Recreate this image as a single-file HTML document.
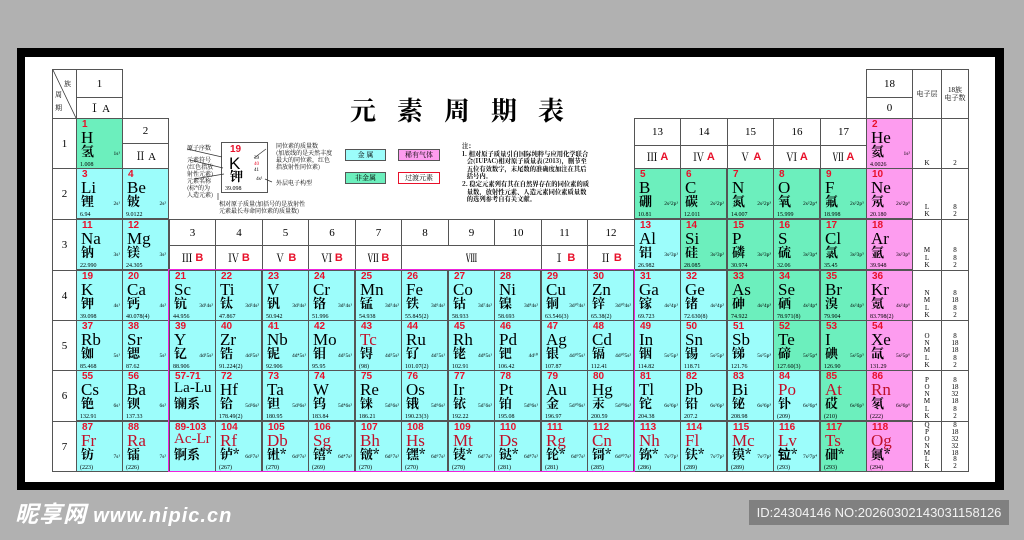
<!DOCTYPE html>
<html><head><meta charset="utf-8">
<style>
*{margin:0;padding:0}
body{width:1024px;height:540px;background:#b1b1b1;position:relative;overflow:hidden;font-family:"Liberation Serif","Noto Serif CJK SC",serif}
#frame{position:absolute;left:17px;top:48px;width:987px;height:442px;background:#000}
#white{position:absolute;left:25px;top:57px;width:970px;height:425px;background:#fff}
.c{position:absolute;width:47px;height:51px;box-sizing:border-box;border:1px solid #555;overflow:hidden;background:#fff;line-height:1}
.c b{position:absolute;left:5px;top:1px;font:bold 10px/1 "Liberation Sans",sans-serif;color:#e8102a;white-space:nowrap}
.c i{position:absolute;left:4px;top:10px;font-style:normal;font-size:17px;line-height:1;color:#000;white-space:nowrap}
.c u{position:absolute;left:4px;top:25px;text-decoration:none;font-size:13px;line-height:1;font-family:"Noto Serif CJK SC",serif;font-weight:bold;white-space:nowrap}
.c s{position:absolute;left:3px;bottom:0px;text-decoration:none;font-size:6px;line-height:1}
.c em{position:absolute;right:2px;top:33px;font-style:normal;font-size:5.5px;line-height:1}
.c .sm{font-size:15px}
.a{background:#9cfdfb}.g{background:#6cefbd}.p{background:#fd9cef}
.r i{color:#c0102a}
.h{position:absolute;box-sizing:border-box;border:1px solid #555;background:#fff;text-align:center;font-size:11px;display:flex;align-items:center;justify-content:center}
.h .rd{color:#e8102a;font-family:"Liberation Sans",sans-serif;font-weight:bold}
.sh{position:absolute;box-sizing:border-box;border:1px solid #555;background:#fff;font-size:7px;text-align:center;line-height:7.2px;display:flex;flex-direction:column;justify-content:flex-end;padding-bottom:1px}
.t{position:absolute;font-size:6.5px;line-height:8px;font-family:"Noto Serif CJK SC",serif;white-space:nowrap}
</style></head><body>
<div id="frame"></div><div id="white"></div>

<div class="h" style="left:52px;top:69px;width:25px;height:50px"></div>
<svg style="position:absolute;left:52px;top:69px" width="25" height="50"><line x1="1" y1="1" x2="24" y2="49" stroke="#333" stroke-width="0.8"/></svg>
<div class="t" style="left:64px;top:80px;font-size:7px">族</div>
<div class="t" style="left:55px;top:91px;font-size:7px">周</div>
<div class="t" style="left:55px;top:104px;font-size:7px">期</div>
<div class="h" style="left:76px;top:69px;width:47px;height:29px">1</div>
<div class="h" style="left:76px;top:97px;width:47px;height:22px">Ⅰ A</div>
<div class="h" style="left:122px;top:118px;width:47px;height:26px">2</div>
<div class="h" style="left:122px;top:143px;width:47px;height:26px">Ⅱ A</div>
<div class="h" style="left:866px;top:69px;width:47px;height:29px">18</div>
<div class="h" style="left:866px;top:97px;width:47px;height:22px">0</div>
<div class="h" style="left:912px;top:69px;width:30px;height:50px;font-size:7px">电子层</div>
<div class="h" style="left:941px;top:69px;width:28px;height:50px;font-size:7px;line-height:8px">18族<br>电子数</div>

<div class="h" style="left:52px;top:118px;width:25px;height:51px">1</div>
<div class="h" style="left:52px;top:168px;width:25px;height:52px">2</div>
<div class="h" style="left:52px;top:219px;width:25px;height:52px">3</div>
<div class="h" style="left:52px;top:270px;width:25px;height:51px">4</div>
<div class="h" style="left:52px;top:320px;width:25px;height:51px">5</div>
<div class="h" style="left:52px;top:370px;width:25px;height:52px">6</div>
<div class="h" style="left:52px;top:421px;width:25px;height:51px">7</div>

<div class="h" style="left:634px;top:118px;width:47px;height:28px">13</div>
<div class="h" style="left:680px;top:118px;width:48px;height:28px">14</div>
<div class="h" style="left:727px;top:118px;width:47px;height:28px">15</div>
<div class="h" style="left:773px;top:118px;width:48px;height:28px">16</div>
<div class="h" style="left:820px;top:118px;width:47px;height:28px">17</div>
<div class="h" style="left:634px;top:145px;width:47px;height:24px">Ⅲ&nbsp;<span class="rd">A</span></div>
<div class="h" style="left:680px;top:145px;width:48px;height:24px">Ⅳ&nbsp;<span class="rd">A</span></div>
<div class="h" style="left:727px;top:145px;width:47px;height:24px">Ⅴ&nbsp;<span class="rd">A</span></div>
<div class="h" style="left:773px;top:145px;width:48px;height:24px">Ⅵ&nbsp;<span class="rd">A</span></div>
<div class="h" style="left:820px;top:145px;width:47px;height:24px">Ⅶ&nbsp;<span class="rd">A</span></div>

<div class="h" style="left:169px;top:219px;width:47px;height:27px">3</div>
<div class="h" style="left:215px;top:219px;width:48px;height:27px">4</div>
<div class="h" style="left:262px;top:219px;width:47px;height:27px">5</div>
<div class="h" style="left:308px;top:219px;width:48px;height:27px">6</div>
<div class="h" style="left:355px;top:219px;width:47px;height:27px">7</div>
<div class="h" style="left:401px;top:219px;width:48px;height:27px">8</div>
<div class="h" style="left:448px;top:219px;width:47px;height:27px">9</div>
<div class="h" style="left:494px;top:219px;width:48px;height:27px">10</div>
<div class="h" style="left:541px;top:219px;width:47px;height:27px">11</div>
<div class="h" style="left:587px;top:219px;width:48px;height:27px">12</div>
<div class="h" style="left:169px;top:245px;width:47px;height:26px">Ⅲ&nbsp;<span class="rd">B</span></div>
<div class="h" style="left:215px;top:245px;width:48px;height:26px">Ⅳ&nbsp;<span class="rd">B</span></div>
<div class="h" style="left:262px;top:245px;width:47px;height:26px">Ⅴ&nbsp;<span class="rd">B</span></div>
<div class="h" style="left:308px;top:245px;width:48px;height:26px">Ⅵ&nbsp;<span class="rd">B</span></div>
<div class="h" style="left:355px;top:245px;width:47px;height:26px">Ⅶ&nbsp;<span class="rd">B</span></div>
<div class="h" style="left:401px;top:245px;width:141px;height:26px">Ⅷ</div>
<div class="h" style="left:541px;top:245px;width:47px;height:26px">Ⅰ&nbsp;<span class="rd">B</span></div>
<div class="h" style="left:587px;top:245px;width:48px;height:26px">Ⅱ&nbsp;<span class="rd">B</span></div>

<div class="sh" style="left:912px;top:118px;width:30px;height:51px">K</div>
<div class="sh" style="left:941px;top:118px;width:28px;height:51px">2</div>
<div class="sh" style="left:912px;top:168px;width:30px;height:52px">L<br>K</div>
<div class="sh" style="left:941px;top:168px;width:28px;height:52px">8<br>2</div>
<div class="sh" style="left:912px;top:219px;width:30px;height:52px">M<br>L<br>K</div>
<div class="sh" style="left:941px;top:219px;width:28px;height:52px">8<br>8<br>2</div>
<div class="sh" style="left:912px;top:270px;width:30px;height:51px">N<br>M<br>L<br>K</div>
<div class="sh" style="left:941px;top:270px;width:28px;height:51px">8<br>18<br>8<br>2</div>
<div class="sh" style="left:912px;top:320px;width:30px;height:51px">O<br>N<br>M<br>L<br>K</div>
<div class="sh" style="left:941px;top:320px;width:28px;height:51px">8<br>18<br>18<br>8<br>2</div>
<div class="sh" style="left:912px;top:370px;width:30px;height:52px">P<br>O<br>N<br>M<br>L<br>K</div>
<div class="sh" style="left:941px;top:370px;width:28px;height:52px">8<br>18<br>32<br>18<br>8<br>2</div>
<div class="sh" style="left:912px;top:421px;width:30px;height:51px;line-height:6.8px">Q<br>P<br>O<br>N<br>M<br>L<br>K</div>
<div class="sh" style="left:941px;top:421px;width:28px;height:51px;line-height:6.8px">8<br>18<br>32<br>32<br>18<br>8<br>2</div>

<div class="c g" style="left:76px;top:118px"><b>1</b><i>H</i><u>氢</u><s>1.008</s><em>1s¹</em></div>
<div class="c p" style="left:866px;top:118px"><b>2</b><i>He</i><u>氦</u><s>4.0026</s><em>1s²</em></div>
<div class="c a" style="left:76px;top:168px"><b>3</b><i>Li</i><u>锂</u><s>6.94</s><em>2s¹</em></div>
<div class="c a" style="left:122px;top:168px"><b>4</b><i>Be</i><u>铍</u><s>9.0122</s><em>2s²</em></div>
<div class="c g" style="left:634px;top:168px"><b>5</b><i>B</i><u>硼</u><s>10.81</s><em>2s²2p¹</em></div>
<div class="c g" style="left:680px;top:168px"><b>6</b><i>C</i><u>碳</u><s>12.011</s><em>2s²2p²</em></div>
<div class="c g" style="left:727px;top:168px"><b>7</b><i>N</i><u>氮</u><s>14.007</s><em>2s²2p³</em></div>
<div class="c g" style="left:773px;top:168px"><b>8</b><i>O</i><u>氧</u><s>15.999</s><em>2s²2p⁴</em></div>
<div class="c g" style="left:820px;top:168px"><b>9</b><i>F</i><u>氟</u><s>18.998</s><em>2s²2p⁵</em></div>
<div class="c p" style="left:866px;top:168px"><b>10</b><i>Ne</i><u>氖</u><s>20.180</s><em>2s²2p⁶</em></div>
<div class="c a" style="left:76px;top:219px"><b>11</b><i>Na</i><u>钠</u><s>22.990</s><em>3s¹</em></div>
<div class="c a" style="left:122px;top:219px"><b>12</b><i>Mg</i><u>镁</u><s>24.305</s><em>3s²</em></div>
<div class="c a" style="left:634px;top:219px"><b>13</b><i>Al</i><u>铝</u><s>26.982</s><em>3s²3p¹</em></div>
<div class="c g" style="left:680px;top:219px"><b>14</b><i>Si</i><u>硅</u><s>28.085</s><em>3s²3p²</em></div>
<div class="c g" style="left:727px;top:219px"><b>15</b><i>P</i><u>磷</u><s>30.974</s><em>3s²3p³</em></div>
<div class="c g" style="left:773px;top:219px"><b>16</b><i>S</i><u>硫</u><s>32.06</s><em>3s²3p⁴</em></div>
<div class="c g" style="left:820px;top:219px"><b>17</b><i>Cl</i><u>氯</u><s>35.45</s><em>3s²3p⁵</em></div>
<div class="c p" style="left:866px;top:219px"><b>18</b><i>Ar</i><u>氩</u><s>39.948</s><em>3s²3p⁶</em></div>
<div class="c a" style="left:76px;top:270px"><b>19</b><i>K</i><u>钾</u><s>39.098</s><em>4s¹</em></div>
<div class="c a" style="left:122px;top:270px"><b>20</b><i>Ca</i><u>钙</u><s>40.078(4)</s><em>4s²</em></div>
<div class="c a" style="left:169px;top:270px"><b>21</b><i>Sc</i><u>钪</u><s>44.956</s><em>3d¹4s²</em></div>
<div class="c a" style="left:215px;top:270px"><b>22</b><i>Ti</i><u>钛</u><s>47.867</s><em>3d²4s²</em></div>
<div class="c a" style="left:262px;top:270px"><b>23</b><i>V</i><u>钒</u><s>50.942</s><em>3d³4s²</em></div>
<div class="c a" style="left:308px;top:270px"><b>24</b><i>Cr</i><u>铬</u><s>51.996</s><em>3d⁵4s¹</em></div>
<div class="c a" style="left:355px;top:270px"><b>25</b><i>Mn</i><u>锰</u><s>54.938</s><em>3d⁵4s²</em></div>
<div class="c a" style="left:401px;top:270px"><b>26</b><i>Fe</i><u>铁</u><s>55.845(2)</s><em>3d⁶4s²</em></div>
<div class="c a" style="left:448px;top:270px"><b>27</b><i>Co</i><u>钴</u><s>58.933</s><em>3d⁷4s²</em></div>
<div class="c a" style="left:494px;top:270px"><b>28</b><i>Ni</i><u>镍</u><s>58.693</s><em>3d⁸4s²</em></div>
<div class="c a" style="left:541px;top:270px"><b>29</b><i>Cu</i><u>铜</u><s>63.546(3)</s><em>3d¹⁰4s¹</em></div>
<div class="c a" style="left:587px;top:270px"><b>30</b><i>Zn</i><u>锌</u><s>65.38(2)</s><em>3d¹⁰4s²</em></div>
<div class="c a" style="left:634px;top:270px"><b>31</b><i>Ga</i><u>镓</u><s>69.723</s><em>4s²4p¹</em></div>
<div class="c a" style="left:680px;top:270px"><b>32</b><i>Ge</i><u>锗</u><s>72.630(8)</s><em>4s²4p²</em></div>
<div class="c g" style="left:727px;top:270px"><b>33</b><i>As</i><u>砷</u><s>74.922</s><em>4s²4p³</em></div>
<div class="c g" style="left:773px;top:270px"><b>34</b><i>Se</i><u>硒</u><s>78.971(8)</s><em>4s²4p⁴</em></div>
<div class="c g" style="left:820px;top:270px"><b>35</b><i>Br</i><u>溴</u><s>79.904</s><em>4s²4p⁵</em></div>
<div class="c p" style="left:866px;top:270px"><b>36</b><i>Kr</i><u>氪</u><s>83.798(2)</s><em>4s²4p⁶</em></div>
<div class="c a" style="left:76px;top:320px"><b>37</b><i>Rb</i><u>铷</u><s>85.468</s><em>5s¹</em></div>
<div class="c a" style="left:122px;top:320px"><b>38</b><i>Sr</i><u>锶</u><s>87.62</s><em>5s²</em></div>
<div class="c a" style="left:169px;top:320px"><b>39</b><i>Y</i><u>钇</u><s>88.906</s><em>4d¹5s²</em></div>
<div class="c a" style="left:215px;top:320px"><b>40</b><i>Zr</i><u>锆</u><s>91.224(2)</s><em>4d²5s²</em></div>
<div class="c a" style="left:262px;top:320px"><b>41</b><i>Nb</i><u>铌</u><s>92.906</s><em>4d⁴5s¹</em></div>
<div class="c a" style="left:308px;top:320px"><b>42</b><i>Mo</i><u>钼</u><s>95.95</s><em>4d⁵5s¹</em></div>
<div class="c a r" style="left:355px;top:320px"><b>43</b><i>Tc</i><u>锝</u><s>(98)</s><em>4d⁵5s²</em></div>
<div class="c a" style="left:401px;top:320px"><b>44</b><i>Ru</i><u>钌</u><s>101.07(2)</s><em>4d⁷5s¹</em></div>
<div class="c a" style="left:448px;top:320px"><b>45</b><i>Rh</i><u>铑</u><s>102.91</s><em>4d⁸5s¹</em></div>
<div class="c a" style="left:494px;top:320px"><b>46</b><i>Pd</i><u>钯</u><s>106.42</s><em>4d¹⁰</em></div>
<div class="c a" style="left:541px;top:320px"><b>47</b><i>Ag</i><u>银</u><s>107.87</s><em>4d¹⁰5s¹</em></div>
<div class="c a" style="left:587px;top:320px"><b>48</b><i>Cd</i><u>镉</u><s>112.41</s><em>4d¹⁰5s²</em></div>
<div class="c a" style="left:634px;top:320px"><b>49</b><i>In</i><u>铟</u><s>114.82</s><em>5s²5p¹</em></div>
<div class="c a" style="left:680px;top:320px"><b>50</b><i>Sn</i><u>锡</u><s>118.71</s><em>5s²5p²</em></div>
<div class="c a" style="left:727px;top:320px"><b>51</b><i>Sb</i><u>锑</u><s>121.76</s><em>5s²5p³</em></div>
<div class="c g" style="left:773px;top:320px"><b>52</b><i>Te</i><u>碲</u><s>127.60(3)</s><em>5s²5p⁴</em></div>
<div class="c g" style="left:820px;top:320px"><b>53</b><i>I</i><u>碘</u><s>126.90</s><em>5s²5p⁵</em></div>
<div class="c p" style="left:866px;top:320px"><b>54</b><i>Xe</i><u>氙</u><s>131.29</s><em>5s²5p⁶</em></div>
<div class="c a" style="left:76px;top:370px"><b>55</b><i>Cs</i><u>铯</u><s>132.91</s><em>6s¹</em></div>
<div class="c a" style="left:122px;top:370px"><b>56</b><i>Ba</i><u>钡</u><s>137.33</s><em>6s²</em></div>
<div class="c a" style="left:169px;top:370px"><b>57-71</b><i class="sm">La-Lu</i><u>镧系</u></div>
<div class="c a" style="left:215px;top:370px"><b>72</b><i>Hf</i><u>铪</u><s>178.49(2)</s><em>5d²6s²</em></div>
<div class="c a" style="left:262px;top:370px"><b>73</b><i>Ta</i><u>钽</u><s>180.95</s><em>5d³6s²</em></div>
<div class="c a" style="left:308px;top:370px"><b>74</b><i>W</i><u>钨</u><s>183.84</s><em>5d⁴6s²</em></div>
<div class="c a" style="left:355px;top:370px"><b>75</b><i>Re</i><u>铼</u><s>186.21</s><em>5d⁵6s²</em></div>
<div class="c a" style="left:401px;top:370px"><b>76</b><i>Os</i><u>锇</u><s>190.23(3)</s><em>5d⁶6s²</em></div>
<div class="c a" style="left:448px;top:370px"><b>77</b><i>Ir</i><u>铱</u><s>192.22</s><em>5d⁷6s²</em></div>
<div class="c a" style="left:494px;top:370px"><b>78</b><i>Pt</i><u>铂</u><s>195.08</s><em>5d⁹6s¹</em></div>
<div class="c a" style="left:541px;top:370px"><b>79</b><i>Au</i><u>金</u><s>196.97</s><em>5d¹⁰6s¹</em></div>
<div class="c a" style="left:587px;top:370px"><b>80</b><i>Hg</i><u>汞</u><s>200.59</s><em>5d¹⁰6s²</em></div>
<div class="c a" style="left:634px;top:370px"><b>81</b><i>Tl</i><u>铊</u><s>204.38</s><em>6s²6p¹</em></div>
<div class="c a" style="left:680px;top:370px"><b>82</b><i>Pb</i><u>铅</u><s>207.2</s><em>6s²6p²</em></div>
<div class="c a" style="left:727px;top:370px"><b>83</b><i>Bi</i><u>铋</u><s>208.98</s><em>6s²6p³</em></div>
<div class="c a r" style="left:773px;top:370px"><b>84</b><i>Po</i><u>钋</u><s>(209)</s><em>6s²6p⁴</em></div>
<div class="c g r" style="left:820px;top:370px"><b>85</b><i>At</i><u>砹</u><s>(210)</s><em>6s²6p⁵</em></div>
<div class="c p r" style="left:866px;top:370px"><b>86</b><i>Rn</i><u>氡</u><s>(222)</s><em>6s²6p⁶</em></div>
<div class="c a r" style="left:76px;top:421px"><b>87</b><i>Fr</i><u>钫</u><s>(223)</s><em>7s¹</em></div>
<div class="c a r" style="left:122px;top:421px"><b>88</b><i>Ra</i><u>镭</u><s>(226)</s><em>7s²</em></div>
<div class="c a r" style="left:169px;top:421px"><b>89-103</b><i class="sm">Ac-Lr</i><u>锕系</u></div>
<div class="c a r" style="left:215px;top:421px"><b>104</b><i>Rf</i><u>𬬻*</u><s>(267)</s><em>6d²7s²</em></div>
<div class="c a r" style="left:262px;top:421px"><b>105</b><i>Db</i><u>𬭊*</u><s>(270)</s><em>6d³7s²</em></div>
<div class="c a r" style="left:308px;top:421px"><b>106</b><i>Sg</i><u>𬭳*</u><s>(269)</s><em>6d⁴7s²</em></div>
<div class="c a r" style="left:355px;top:421px"><b>107</b><i>Bh</i><u>𬭛*</u><s>(270)</s><em>6d⁵7s²</em></div>
<div class="c a r" style="left:401px;top:421px"><b>108</b><i>Hs</i><u>𬭶*</u><s>(270)</s><em>6d⁶7s²</em></div>
<div class="c a r" style="left:448px;top:421px"><b>109</b><i>Mt</i><u>鿏*</u><s>(278)</s><em>6d⁷7s²</em></div>
<div class="c a r" style="left:494px;top:421px"><b>110</b><i>Ds</i><u>𫟼*</u><s>(281)</s><em>6d⁸7s²</em></div>
<div class="c a r" style="left:541px;top:421px"><b>111</b><i>Rg</i><u>𬬭*</u><s>(281)</s><em>6d⁹7s²</em></div>
<div class="c a r" style="left:587px;top:421px"><b>112</b><i>Cn</i><u>鿔*</u><s>(285)</s><em>6d¹⁰7s²</em></div>
<div class="c a r" style="left:634px;top:421px"><b>113</b><i>Nh</i><u>鿭*</u><s>(286)</s><em>7s²7p¹</em></div>
<div class="c a r" style="left:680px;top:421px"><b>114</b><i>Fl</i><u>𫓧*</u><s>(289)</s><em>7s²7p²</em></div>
<div class="c a r" style="left:727px;top:421px"><b>115</b><i>Mc</i><u>镆*</u><s>(289)</s><em>7s²7p³</em></div>
<div class="c a r" style="left:773px;top:421px"><b>116</b><i>Lv</i><u>𫟷*</u><s>(293)</s><em>7s²7p⁴</em></div>
<div class="c g r" style="left:820px;top:421px"><b>117</b><i>Ts</i><u>鿬*</u><s>(293)</s></div>
<div class="c p r" style="left:866px;top:421px"><b>118</b><i>Og</i><u>鿫*</u><s>(294)</s></div>

<div style="position:absolute;left:168px;top:269px;width:467px;height:203px;box-sizing:border-box;border:1.5px solid #ee22dd"></div>

<div style="position:absolute;left:350px;top:94px;font:bold 26px/1.2 'Noto Serif CJK SC','Noto Sans CJK SC',serif;letter-spacing:21px;white-space:nowrap">元素周期表</div>

<div style="position:absolute;left:221px;top:142px;width:47px;height:51px;border:1px solid #555;box-sizing:border-box;background:#fff;line-height:1">
<div style="position:absolute;left:8px;top:2px;font:bold 10px/1 'Liberation Sans',sans-serif;color:#e8102a">19</div>
<div style="position:absolute;left:7px;top:12px;font:17px/1 'Liberation Sans',sans-serif">K</div>
<div style="position:absolute;left:8px;top:26px;font:bold 13px/1 'Noto Serif CJK SC',serif">钾</div>
<div style="position:absolute;left:3px;top:43px;font-size:6px">39.098</div>
<div style="position:absolute;left:32px;top:13px;font-size:5px;line-height:6px">39<br><span style="color:#e8102a">40</span><br>41</div>
<div style="position:absolute;left:34px;top:34px;font-size:5.5px">4s¹</div>
</div>
<svg style="position:absolute;left:160px;top:140px" width="170" height="60"><g stroke="#333" stroke-width="0.7" fill="none">
<line x1="27" y1="9" x2="62" y2="17"/><line x1="30" y1="20" x2="63" y2="28"/><line x1="34" y1="39" x2="64" y2="34"/>
<line x1="106" y1="9" x2="94" y2="18"/><line x1="112" y1="42" x2="105" y2="39"/><line x1="58" y1="53" x2="58" y2="60"/></g></svg>
<div class="t" style="left:187px;top:144px;font-size:6px;line-height:7px">原子序数</div>
<div class="t" style="left:187px;top:156px;font-size:6px;line-height:7px">元素符号<br>(红色指放<br>射性元素)</div>
<div class="t" style="left:187px;top:177px;font-size:6px;line-height:7px">元素名称<br>(标*的为<br>人造元素)</div>
<div class="t" style="left:276px;top:142px;font-size:6px;line-height:7px">同位素的质量数<br>(加底线的是天然丰度<br>最大的同位素，红色<br>指放射性同位素)</div>
<div class="t" style="left:276px;top:179px;font-size:6px">外层电子构型</div>
<div class="t" style="left:219px;top:200px;font-size:6px;line-height:7px">相对原子质量(加括号的是放射性<br>元素最长寿命同位素的质量数)</div>

<div class="t" style="left:345px;top:149px;width:41px;height:12px;background:#9cfdfb;border:1px solid #555;box-sizing:border-box;text-align:center;line-height:10px;font-size:7px">金 属</div>
<div class="t" style="left:398px;top:149px;width:42px;height:12px;background:#fd9cef;border:1px solid #555;box-sizing:border-box;text-align:center;line-height:10px;font-size:7px">稀有气体</div>
<div class="t" style="left:345px;top:172px;width:41px;height:12px;background:#6cefbd;border:1px solid #555;box-sizing:border-box;text-align:center;line-height:10px;font-size:7px">非金属</div>
<div class="t" style="left:398px;top:172px;width:42px;height:12px;background:#fff;border:1px solid #e8102a;box-sizing:border-box;text-align:center;line-height:10px;font-size:7px">过渡元素</div>

<div class="t" style="left:462px;top:142px;font-size:6.3px;line-height:7.6px;font-weight:bold">注：<br>1. 相对原子质量引自国际纯粹与应用化学联合<br>&nbsp;&nbsp;&nbsp;会(IUPAC)相对原子质量表(2013)，删节至<br>&nbsp;&nbsp;&nbsp;五位有效数字，末尾数的准确度加注在其后<br>&nbsp;&nbsp;&nbsp;括号内。<br>2. 稳定元素列有其在自然界存在的同位素的质<br>&nbsp;&nbsp;&nbsp;量数，放射性元素、人造元素同位素质量数<br>&nbsp;&nbsp;&nbsp;的选列参考自有关文献。</div>

<div style="position:absolute;left:15px;top:499px;font:italic bold 23px/1.2 'Noto Sans CJK SC','Liberation Sans',sans-serif;color:#fff;letter-spacing:1px;white-space:nowrap">昵享网 <span style="font:italic bold 20px 'Liberation Sans',sans-serif">www.nipic.cn</span></div>
<div style="position:absolute;left:749px;top:500px;width:260px;height:25px;background:#808080;color:#f2f2f2;font:13px 'Liberation Sans',sans-serif;line-height:25px;text-align:center;white-space:nowrap">ID:24304146 NO:20260302143031158126</div>
</body></html>
